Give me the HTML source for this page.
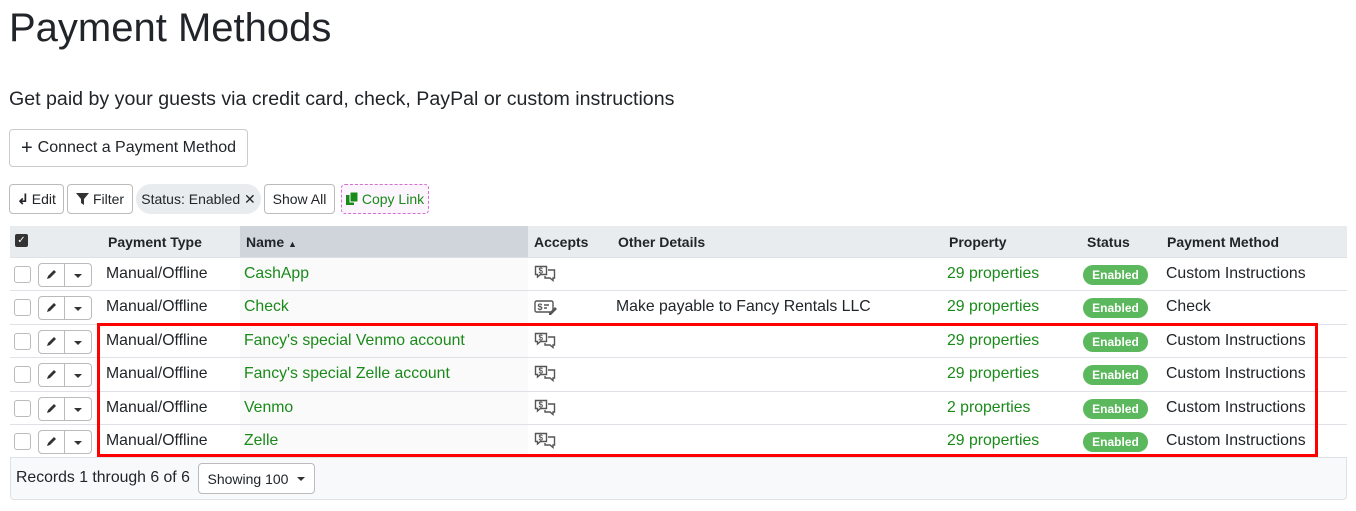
<!DOCTYPE html>
<html><head><style>
body{margin:0;background:#fff;font-family:"Liberation Sans",Arial,sans-serif;color:#212529;width:1356px;height:511px;overflow:hidden;position:relative}
.a{position:absolute;white-space:nowrap}
.btn{position:absolute;border:1px solid #bbb;border-radius:4px;background:#fff;font-size:14px;box-sizing:border-box;display:flex;align-items:center;justify-content:center}
.row{position:absolute;left:10px;width:1337px;border-top:1px solid #dee2e6;box-sizing:border-box;font-size:15.8px}
.row .a{top:7px}
.g{color:#1a8a1a}
.cb{position:absolute;left:4px;width:15px;height:15px;border:1px solid #bbb;border-radius:3px;background:#fff;top:8px}
.bg{position:absolute;left:28px;top:5px;width:54px;height:24px;border:1px solid #bbb;border-radius:4px;box-sizing:border-box}
.bg:after{content:"";position:absolute;left:25px;top:0;bottom:0;border-left:1px solid #bbb}
.caret{position:absolute;left:35px;top:10px;border-left:4px solid transparent;border-right:4px solid transparent;border-top:4px solid #333}
.pen{position:absolute;left:6px;top:4px}
.badge{position:absolute;left:1073px;top:7px!important;width:65px;height:20px;border-radius:10px;background:#5cb85c;color:#fff;font-weight:bold;font-size:12px;text-align:center;line-height:20px}
.namebg{position:absolute;left:230px;width:288px;top:0;bottom:0;background:#fafafa}
.ic{position:absolute;left:524px;top:7px}
</style></head><body>
<svg width="0" height="0" style="position:absolute"><defs>
<g id="chat"><path d="M1.5 1.5h11v8h-6l-3 2.5v-2.5h-2z" fill="none" stroke="#555" stroke-width="1.4"/><path d="M14 5h6.5v8h-1.5v2.5l-3-2.5h-5v-2" fill="none" stroke="#555" stroke-width="1.4"/><text x="4.5" y="8.5" font-size="8" font-family="Liberation Sans" fill="#555" font-weight="bold">$</text></g>
<g id="chk"><rect x="1" y="3" width="18" height="11" rx="1.5" fill="none" stroke="#555" stroke-width="1.4"/><text x="3.5" y="12" font-size="9" font-family="Liberation Sans" fill="#555" font-weight="bold">$</text><path d="M10 7h5M10 10h3" stroke="#555" stroke-width="1.4"/><path d="M15 15l6-6 2 2-6 6h-2z" fill="#555"/></g>
<g id="pen"><path d="M2 11l1-3 6-6 2 2-6 6z" fill="#333"/></g>
</defs></svg>
<div class="a" style="left:9px;top:6px;font-size:40px">Payment Methods</div>
<div class="a" style="left:9px;top:88px;font-size:19.6px">Get paid by your guests via credit card, check, PayPal or custom instructions</div>
<div class="btn" style="left:9px;top:129px;width:239px;height:38px;font-size:16px;border-color:#ccc"><b style="font-size:20px;font-weight:normal;margin-right:5px">+</b>Connect a Payment Method</div>
<div class="btn" style="left:9px;top:184px;width:55px;height:30px"><b style="margin-right:3px">↲</b>Edit</div>
<div class="btn" style="left:67px;top:184px;width:66px;height:30px"><svg width="13" height="12" style="margin-right:4px"><path d="M0 0h13l-5 6v6l-3-2v-4z" fill="#333"/></svg>Filter</div>
<div class="btn" style="left:136px;top:184px;width:125px;height:30px;border:none;background:#e9ecef;border-radius:15px">Status: Enabled ✕</div>
<div class="btn" style="left:264px;top:184px;width:71px;height:30px">Show All</div>
<div class="btn" style="left:341px;top:184px;width:88px;height:30px;border:1px dashed #d36ed3;background:#fdf5fd;color:#1a8a1a"><svg width="13" height="14" style="margin-right:3px"><rect x="0" y="3" width="8" height="10" fill="#1a8a1a"/><rect x="4" y="0" width="8" height="10" fill="#1a8a1a" stroke="#fff" stroke-width="1"/></svg>Copy Link</div>

<div style="position:absolute;left:10px;top:226px;width:1337px;height:274px;border:1px solid #dee2e6;border-radius:4px;box-sizing:border-box;background:#f8f9fa"></div>
<div style="position:absolute;left:10px;top:226px;width:1337px;height:31px;background:#e9ecef"></div>
<div style="position:absolute;left:240px;top:226px;width:288px;height:31px;background:#d0d5dc"></div>
<div style="position:absolute;left:15px;top:234px;width:13px;height:13px;background:#333;border-radius:2px;color:#fff;font-size:10px;text-align:center;line-height:13px">✓</div>
<div class="a" style="top:234px;left:108px;font-size:14px;font-weight:bold">Payment Type</div>
<div class="a" style="top:234px;left:246px;font-size:14px;font-weight:bold">Name <span style="font-size:9px">▲</span></div>
<div class="a" style="top:234px;left:534px;font-size:14px;font-weight:bold">Accepts</div>
<div class="a" style="top:234px;left:618px;font-size:14px;font-weight:bold">Other Details</div>
<div class="a" style="top:234px;left:949px;font-size:14px;font-weight:bold">Property</div>
<div class="a" style="top:234px;left:1087px;font-size:14px;font-weight:bold">Status</div>
<div class="a" style="top:234px;left:1167px;font-size:14px;font-weight:bold">Payment Method</div>

<div class="row" style="top:257px;height:34px;background:#fff"><div class="namebg"></div><div class="cb"></div><div class="bg"><svg class="pen" width="12" height="12"><use href="#pen"/></svg><span class="caret"></span></div><span class="a" style="left:96px">Manual/Offline</span><span class="a g" style="left:234px">CashApp</span><svg class="ic" width="24" height="18"><use href="#chat"/></svg><span class="a g" style="left:937px">29 properties</span><span class="a badge">Enabled</span><span class="a" style="left:1156px">Custom Instructions</span></div>
<div class="row" style="top:290px;height:34px;background:#fff"><div class="namebg"></div><div class="cb"></div><div class="bg"><svg class="pen" width="12" height="12"><use href="#pen"/></svg><span class="caret"></span></div><span class="a" style="left:96px">Manual/Offline</span><span class="a g" style="left:234px">Check</span><svg class="ic" width="24" height="18"><use href="#chk"/></svg><span class="a" style="left:606px">Make payable to Fancy Rentals LLC</span><span class="a g" style="left:937px">29 properties</span><span class="a badge">Enabled</span><span class="a" style="left:1156px">Check</span></div>
<div class="row" style="top:324px;height:34px;background:#fff"><div class="namebg"></div><div class="cb"></div><div class="bg"><svg class="pen" width="12" height="12"><use href="#pen"/></svg><span class="caret"></span></div><span class="a" style="left:96px">Manual/Offline</span><span class="a g" style="left:234px">Fancy's special Venmo account</span><svg class="ic" width="24" height="18"><use href="#chat"/></svg><span class="a g" style="left:937px">29 properties</span><span class="a badge">Enabled</span><span class="a" style="left:1156px">Custom Instructions</span></div>
<div class="row" style="top:357px;height:34px;background:#fff"><div class="namebg"></div><div class="cb"></div><div class="bg"><svg class="pen" width="12" height="12"><use href="#pen"/></svg><span class="caret"></span></div><span class="a" style="left:96px">Manual/Offline</span><span class="a g" style="left:234px">Fancy's special Zelle account</span><svg class="ic" width="24" height="18"><use href="#chat"/></svg><span class="a g" style="left:937px">29 properties</span><span class="a badge">Enabled</span><span class="a" style="left:1156px">Custom Instructions</span></div>
<div class="row" style="top:391px;height:34px;background:#fff"><div class="namebg"></div><div class="cb"></div><div class="bg"><svg class="pen" width="12" height="12"><use href="#pen"/></svg><span class="caret"></span></div><span class="a" style="left:96px">Manual/Offline</span><span class="a g" style="left:234px">Venmo</span><svg class="ic" width="24" height="18"><use href="#chat"/></svg><span class="a g" style="left:937px">2 properties</span><span class="a badge">Enabled</span><span class="a" style="left:1156px">Custom Instructions</span></div>
<div class="row" style="top:424px;height:34px;background:#fff;border-bottom:1px solid #dee2e6"><div class="namebg"></div><div class="cb"></div><div class="bg"><svg class="pen" width="12" height="12"><use href="#pen"/></svg><span class="caret"></span></div><span class="a" style="left:96px">Manual/Offline</span><span class="a g" style="left:234px">Zelle</span><svg class="ic" width="24" height="18"><use href="#chat"/></svg><span class="a g" style="left:937px">29 properties</span><span class="a badge">Enabled</span><span class="a" style="left:1156px">Custom Instructions</span></div>

<div style="position:absolute;left:97px;top:323px;width:1221px;height:134px;border:3px solid #f00;box-sizing:border-box"></div>

<div class="a" style="left:16px;top:469px;font-size:15.8px">Records 1 through 6 of 6</div>
<div class="btn" style="left:198px;top:463px;width:117px;height:31px">Showing 100 <span style="display:inline-block;margin-left:9px;border-left:4px solid transparent;border-right:4px solid transparent;border-top:4px solid #333"></span></div>
</body></html>
